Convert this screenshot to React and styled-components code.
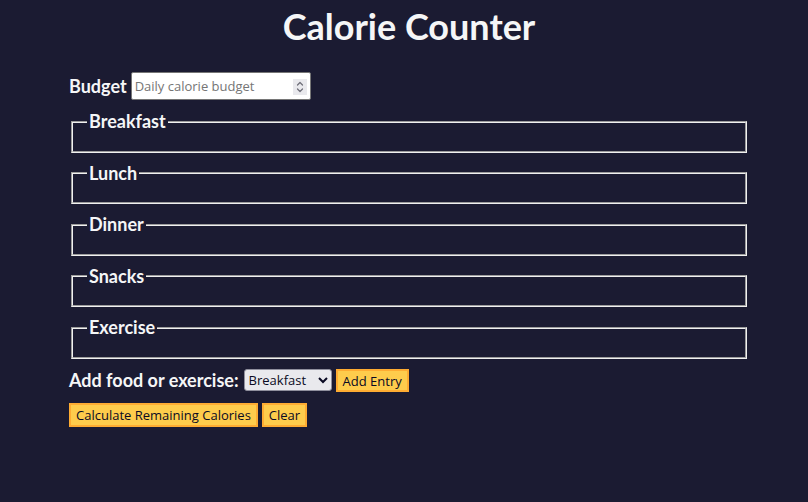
import React from 'react';
import styled, { createGlobalStyle } from 'styled-components';

const GlobalStyle = createGlobalStyle`
  body {
    margin: 0;
    padding: 0 0 0 10px;
    background-color: #1b1b32;
    color: #f5f6f7;
    font-family: Lato, "Liberation Sans", sans-serif;
    font-size: 18px;
  }
`;

const Main = styled.main`
  width: 680px;
  margin: 0 auto;
  padding-top: 4.5px;
`;

const Title = styled.h1`
  margin: 0;
  font-size: 36px;
  line-height: 43px;
  font-weight: 700;
  text-align: center;
`;

const Row = styled.div`
  display: flex;
  align-items: center;
  gap: ${(p) => p.gap || 4}px;
  margin-top: ${(p) => p.top || 0}px;
  height: ${(p) => p.height || 22}px;
`;

const Label = styled.label`
  font-weight: 700;
  font-size: 18px;
  margin-right: ${(p) => p.space || 0}px;
`;

const InputWrap = styled.span`
  position: relative;
  display: inline-flex;
`;

const BudgetInput = styled.input`
  box-sizing: border-box;
  width: 180px;
  height: 28px;
  padding: 1px 3px;
  border: 1px solid #767676;
  border-radius: 2px;
  background: #fff;
  font-family: "Open Sans", "Liberation Sans", sans-serif;
  font-size: 13px;
  color: #0a0a23;
  -moz-appearance: textfield;

  &::placeholder {
    color: #757575;
  }

  &::-webkit-inner-spin-button,
  &::-webkit-outer-spin-button {
    -webkit-appearance: none;
    margin: 0;
  }
`;

const SpinBox = styled.span`
  position: absolute;
  right: 4px;
  top: 7px;
  width: 14px;
  height: 16px;
  background: #e9e9ed;
  display: flex;
  align-items: center;
  justify-content: center;
  pointer-events: none;
`;

const Entries = styled.div`
  margin-top: 11px;
`;

const Fieldset = styled.fieldset`
  margin: 0 2px 10px;
  padding: 6px 14px 12px;
  border: 2px groove #f0f0f0;
  min-height: 0;

  &:last-child {
    margin-bottom: 0;
  }
`;

const Legend = styled.legend`
  padding: 0 2px;
  font-weight: 700;
  font-size: 18px;
  line-height: 21.5px;
`;

const Select = styled.select`
  height: 22px;
  width: 88px;
  font-family: "Open Sans", "Liberation Sans", sans-serif;
  font-size: 13px;
  color: #0a0a23;
  background: #e9e9ed;
  border: 1px solid #8f8f9d;
  border-radius: 3px;
`;

const Button = styled.button`
  box-sizing: border-box;
  height: ${(p) => p.h || 24}px;
  padding: 1px 5px;
  background-color: #fecc4c;
  border: 2px solid #feac32;
  color: #0a0a23;
  font-family: "Open Sans", "Liberation Sans", sans-serif;
  font-size: 13px;
  cursor: pointer;
`;

const sections = ['Breakfast', 'Lunch', 'Dinner', 'Snacks', 'Exercise'];

export default function App() {
  return (
    <>
      <GlobalStyle />
      <Main>
        <Title>Calorie Counter</Title>
        <Row top={24.5} height={28}>
          <Label htmlFor="budget">Budget</Label>
          <InputWrap>
            <BudgetInput id="budget" type="number" min="0" placeholder="Daily calorie budget" />
            <SpinBox>
              <svg width="8" height="12" viewBox="0 0 8 12" fill="none" stroke="#6d6d78" strokeWidth="1.2" strokeLinecap="round" strokeLinejoin="round">
                <polyline points="1.5,4 4,1.5 6.5,4" />
                <polyline points="1.5,8 4,10.5 6.5,8" />
              </svg>
            </SpinBox>
          </InputWrap>
        </Row>
        <Entries>
          {sections.map((name) => (
            <Fieldset key={name}>
              <Legend>{name}</Legend>
            </Fieldset>
          ))}
        </Entries>
        <Row top={10} height={23}>
          <Label htmlFor="entry-dropdown" space={1}>Add food or exercise:</Label>
          <Select id="entry-dropdown" defaultValue="breakfast">
            <option value="breakfast">Breakfast</option>
            <option value="lunch">Lunch</option>
            <option value="dinner">Dinner</option>
            <option value="snacks">Snacks</option>
            <option value="exercise">Exercise</option>
          </Select>
          <Button h={23}>Add Entry</Button>
        </Row>
        <Row top={11} height={24}>
          <Button>Calculate Remaining Calories</Button>
          <Button>Clear</Button>
        </Row>
      </Main>
    </>
  );
}
